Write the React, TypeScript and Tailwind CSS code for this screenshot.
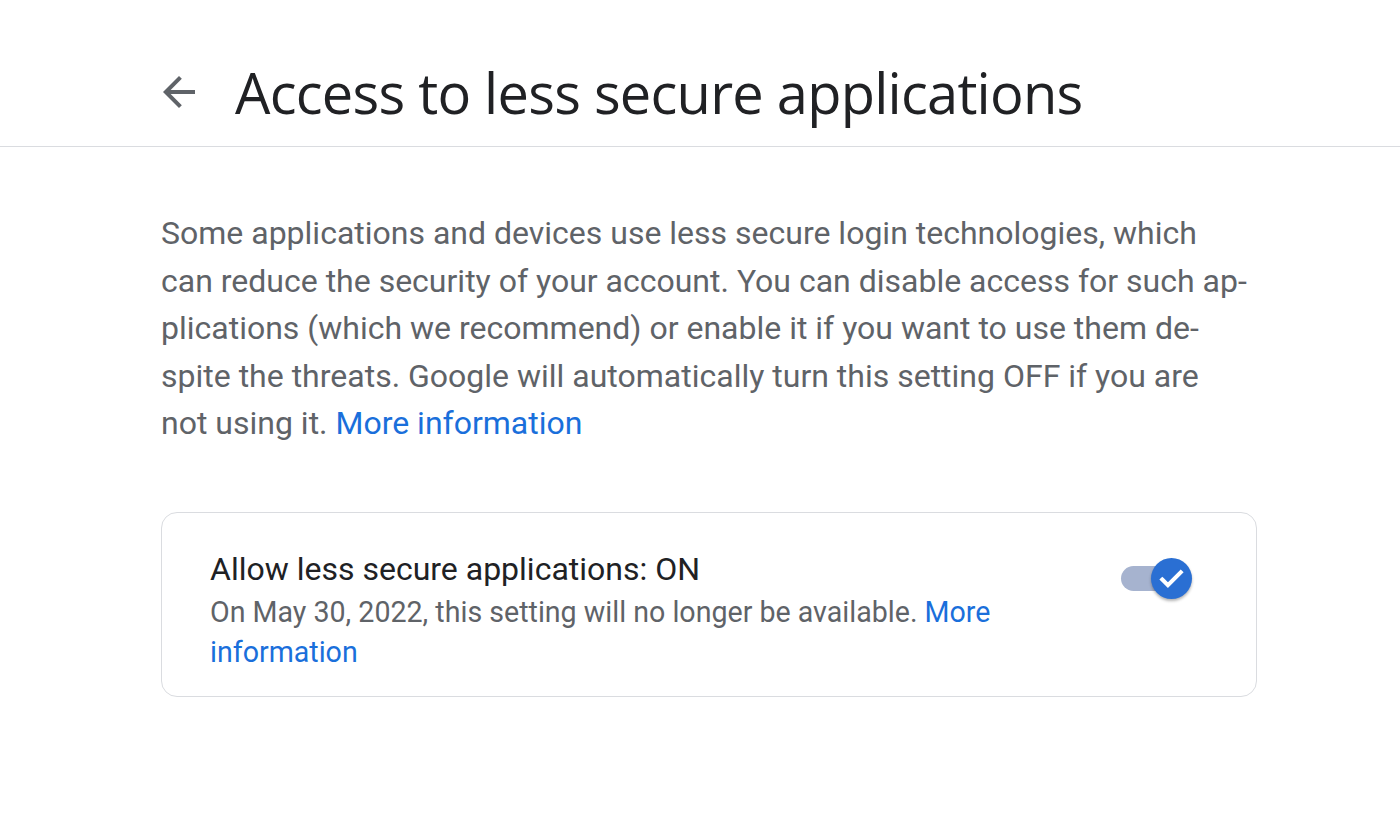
import React from "react";

export default function App() {
  const roboto = { fontFamily: "Roboto, 'Liberation Sans', sans-serif" };
  return (
    <div className="w-[1400px] h-[838px] bg-white overflow-hidden" style={roboto}>
      <header className="h-[147px] border-b border-[#dadce0] flex items-center pl-[155px] pt-[38px]">
        <button className="w-[48px] h-[48px] flex items-center justify-center text-[#5f6368]">
          <svg width="48" height="48" viewBox="0 0 24 24" fill="currentColor">
            <path d="M20 11H7.83l5.59-5.59L12 4l-8 8 8 8 1.41-1.41L7.83 13H20v-2z" />
          </svg>
        </button>
        <h1
          className="ml-[32px] text-[56px] leading-none text-[#202124] tracking-[-0.75px]"
          style={{ fontFamily: "'Open Sans', 'Noto Sans', sans-serif" }}
        >
          Access to less secure applications
        </h1>
      </header>
      <main className="pl-[161px]">
        <p className="mt-[63px] text-[32px] leading-[47.5px] text-[#5f6368]">
          <span className="block">Some applications and devices use less secure login technologies, which</span>
          <span className="block">can reduce the security of your account. You can disable access for such ap-</span>
          <span className="block">plications (which we recommend) or enable it if you want to use them de-</span>
          <span className="block">spite the threats. Google will automatically turn this setting OFF if you are</span>
          <span className="block">
            not using it. <a className="text-[#1a6fdb]">More information</a>
          </span>
        </p>
        <div className="mt-[64px] w-[1096px] h-[185px] border border-[#dadce0] rounded-[16px] flex items-start pl-[48px] pr-[64px] pt-[36px]">
          <div className="flex-1 flex flex-col">
            <div className="text-[32px] leading-[40px] text-[#202124]">Allow less secure applications: ON</div>
            <div className="mt-[3px] text-[28.6px] leading-[40px] text-[#5f6368] w-[820px]">
              On May 30, 2022, this setting will no longer be available.{" "}
              <a className="text-[#1a6fdb]">More information</a>
            </div>
          </div>
          <div className="relative w-[72px] h-[42px] mt-[9px]">
            <div className="absolute left-[1px] top-[8px] w-[52px] h-[25px] rounded-full bg-[#a6b3cf]" />
            <div className="absolute left-[31px] top-0 w-[41px] h-[41px] rounded-full bg-[#2a6fd3] shadow-[0_2px_3px_rgba(0,0,0,0.3)] flex items-center justify-center">
              <svg width="41" height="41" viewBox="0 0 40 40" fill="none" stroke="white" strokeWidth="4" strokeLinecap="square">
                <path d="M11 21l5.5 5.5L29 14" />
              </svg>
            </div>
          </div>
        </div>
      </main>
    </div>
  );
}
